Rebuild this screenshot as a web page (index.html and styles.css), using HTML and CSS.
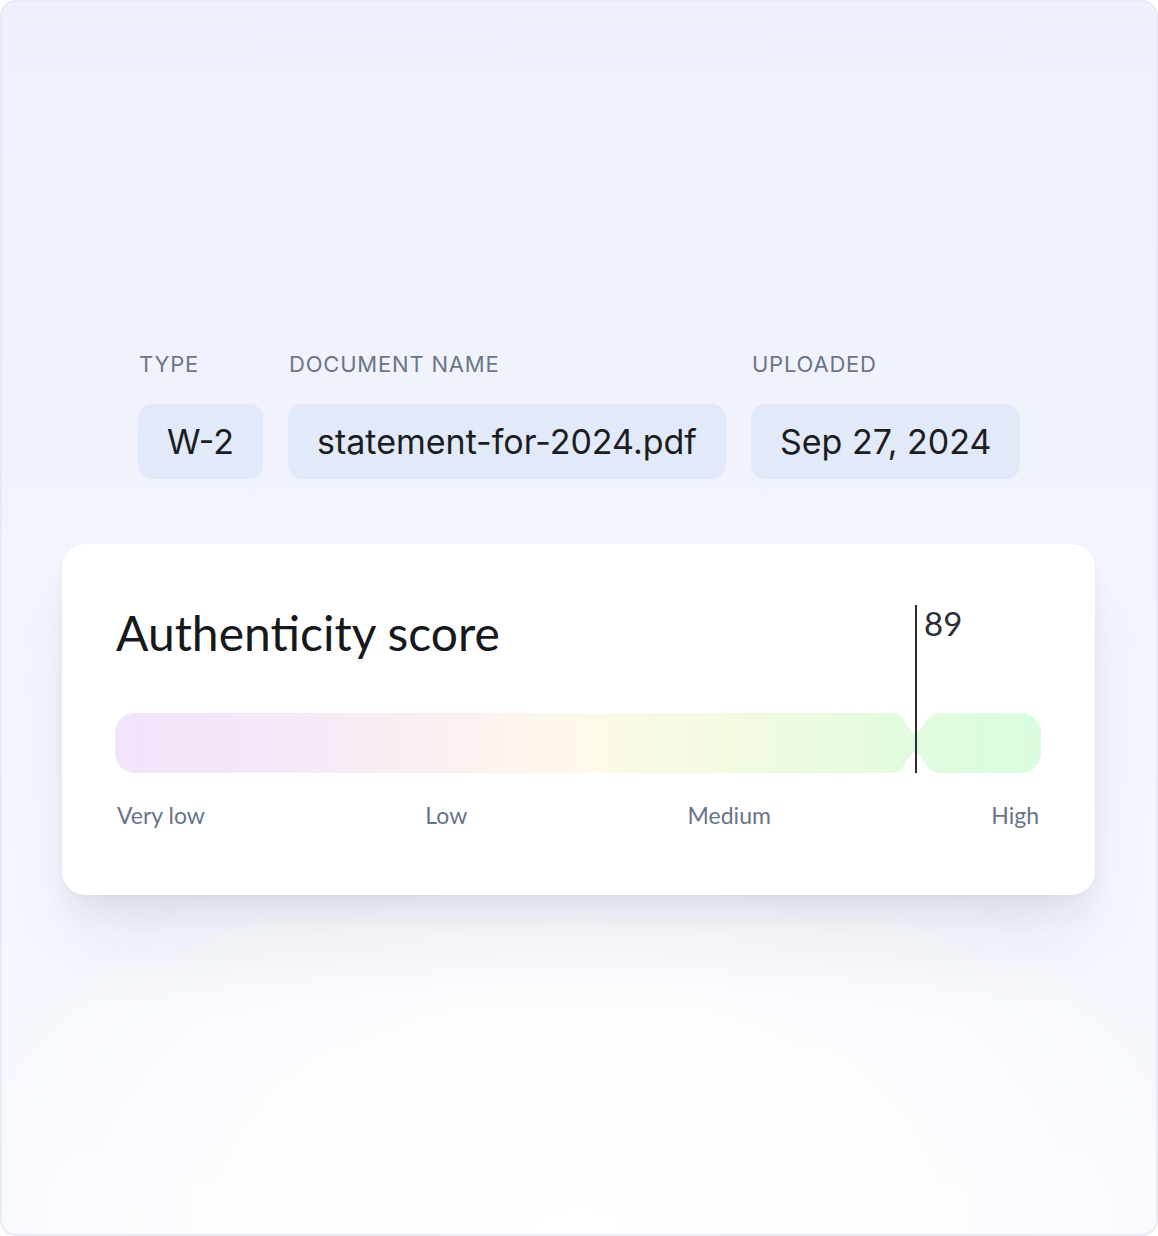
FILE: index.html
```html
<!DOCTYPE html>
<html>
<head>
<meta charset="utf-8">
<link rel="stylesheet" href="styles.css">
</head>
<body>
<div class="frame">
  <div class="meta">
    <div class="label">TYPE</div>
    <div class="label">DOCUMENT NAME</div>
    <div class="label">UPLOADED</div>
    <div class="pill">W-2</div>
    <div class="pill">statement-for-2024.pdf</div>
    <div class="pill">Sep 27, 2024</div>
  </div>
  <div class="card">
    <div class="title">Authenticity score</div>
    <div class="bar">
      <svg class="bar-svg" width="926" height="60" viewBox="0 0 926 60">
        <defs>
          <linearGradient id="g" x1="0" y1="0" x2="1" y2="0">
            <stop offset="0" stop-color="#f1e4fb"/>
            <stop offset="0.18" stop-color="#f4e8f8"/>
            <stop offset="0.32" stop-color="#f9eef2"/>
            <stop offset="0.45" stop-color="#fdf6ec"/>
            <stop offset="0.52" stop-color="#fef9e8"/>
            <stop offset="0.66" stop-color="#f2fae2"/>
            <stop offset="0.85" stop-color="#e2fbde"/>
            <stop offset="1" stop-color="#d9fde0"/>
          </linearGradient>
        </defs>
        <path fill="url(#g)" d="M20,0 H777 C791,0 792,20 800,20 C808,20 810,0 825,0 H906 A20,20 0 0 1 926,20 V40 A20,20 0 0 1 906,60 H825 C810,60 808,40 800,40 C792,40 791,60 777,60 H20 A20,20 0 0 1 0,40 V20 A20,20 0 0 1 20,0 Z"/>
      </svg>
      <div class="marker"></div>
      <div class="score">89</div>
    </div>
    <div class="scale">
      <span>Very low</span>
      <span>Low</span>
      <span>Medium</span>
      <span>High</span>
    </div>
  </div>
</div>
</body>
</html>
```
FILE: styles.css
```css
html, body {
  margin: 0;
  padding: 0;
  background: #ffffff;
}
.frame {
  width: 1158px;
  height: 1236px;
  box-sizing: border-box;
  border: 2px solid #e6eaf6;
  border-radius: 16px;
  overflow: hidden;
  padding-top: 350px;
  background:
    radial-gradient(ellipse 640px 440px at 50% 100%, rgba(255,255,255,1) 0%, rgba(255,255,255,0.85) 45%, rgba(255,255,255,0) 100%),
    linear-gradient(180deg, #eef1fb 0%, #f1f4fd 45%, #f7f9fe 100%);
  font-family: Inter, "Liberation Sans", sans-serif;
}
.meta {
  display: grid;
  grid-template-columns: auto auto auto;
  justify-content: start;
  column-gap: 25px;
  row-gap: 28px;
  margin-left: 136px;
}
.label {
  font-size: 22px;
  line-height: 24px;
  color: #6b7588;
  letter-spacing: 0.8px;
  margin-left: 1px;
}
.pill {
  background: #e2e9f8;
  border-radius: 14px;
  padding: 18px 29px;
  font-size: 34px;
  line-height: 39px;
  color: #1b1d22;
}
.card {
  margin-top: 65px;
  margin-left: 60px;
  width: 1033px;
  box-sizing: border-box;
  background: #ffffff;
  border-radius: 24px;
  padding: 61px 54px 67px 53px;
  box-shadow: 0 22px 30px -8px rgba(30, 40, 70, 0.07), 0 60px 80px -10px rgba(30, 40, 70, 0.06), 0 2px 6px rgba(30,40,70,0.03);
  font-family: Lato, "Open Sans", sans-serif;
}
.title {
  font-size: 48px;
  line-height: 56px;
  color: #17181c;
  margin-left: 1px;
}
.bar {
  position: relative;
  margin-top: 52px;
  width: 926px;
  height: 60px;
}
.bar-svg {
  display: block;
}
.marker {
  position: absolute;
  left: 800px;
  top: -108px;
  width: 1.5px;
  height: 168px;
  background: #2a2d35;
}
.score {
  position: absolute;
  left: 809px;
  top: -110px;
  font-size: 33px;
  line-height: 40px;
  color: #2b2f3a;
}
.scale {
  display: flex;
  justify-content: space-between;
  margin-top: 29px;
  margin-left: 2px;
  width: 922px;
  font-size: 23px;
  line-height: 26px;
  color: #66748a;
}
```
